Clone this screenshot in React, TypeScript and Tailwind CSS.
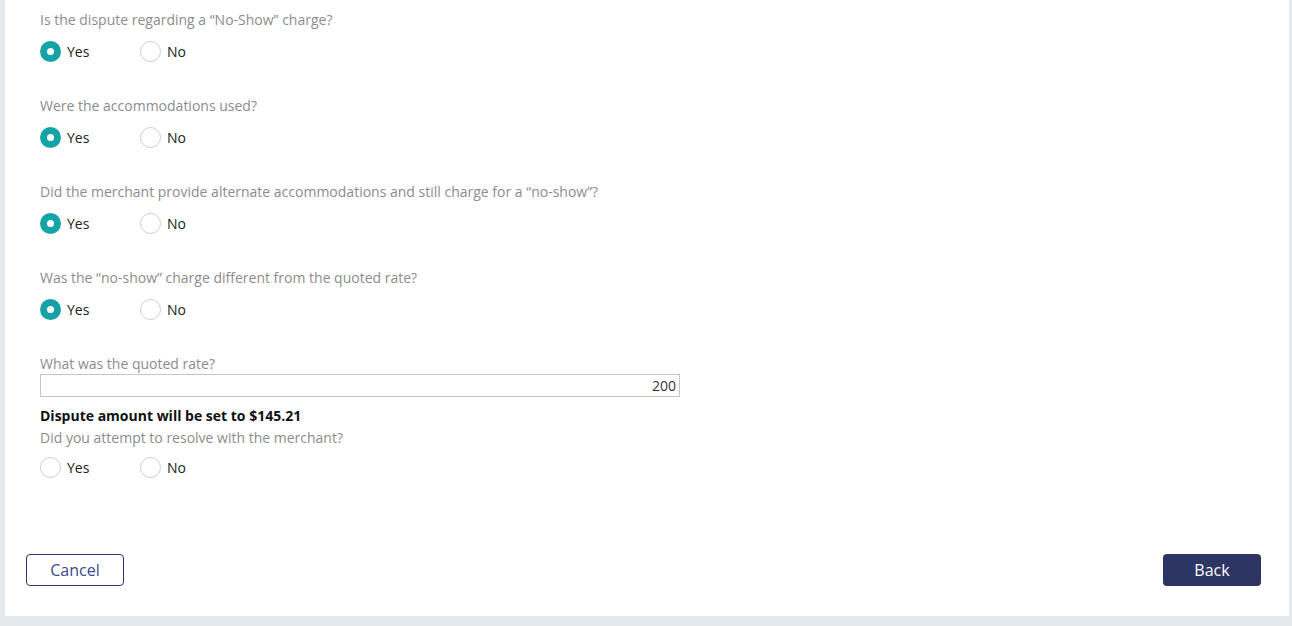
import React from "react";

const font = { fontFamily: '"Open Sans", "Noto Sans", sans-serif' };

function Radio({ checked, label }: { checked: boolean; label: string }) {
  return (
    <div className="flex items-center gap-[6px] w-[100px]">
      {checked ? (
        <span className="w-[21px] h-[21px] rounded-full bg-[#15a3a8] flex items-center justify-center">
          <span className="w-[7px] h-[7px] rounded-full bg-white" />
        </span>
      ) : (
        <span className="w-[21px] h-[21px] rounded-full border border-[#c9ced6] bg-white" />
      )}
      <span className="text-[14px] text-[#222] leading-[20px]">{label}</span>
    </div>
  );
}

function Question({ q, value }: { q: string; value: "yes" | "no" | null }) {
  return (
    <div className="mb-[34px]">
      <div className="text-[14px] leading-[20px] text-[#8c8c8c]">{q}</div>
      <div className="flex mt-[11px] h-[21px]">
        <Radio checked={value === "yes"} label="Yes" />
        <Radio checked={value === "no"} label="No" />
      </div>
    </div>
  );
}

export default function App() {
  return (
    <div className="w-[1292px] h-[626px] bg-[#e5e9ec] pl-[5px] pr-[3px] pb-[10px]" style={font}>
      <div className="bg-white h-full flex flex-col">
        <div className="pl-[35px] pt-[10px]">
          <Question q={"Is the dispute regarding a \u201cNo-Show\u201d charge?"} value="yes" />
          <Question q="Were the accommodations used?" value="yes" />
          <Question q={"Did the merchant provide alternate accommodations and still charge for a \u201cno-show\u201d?"} value="yes" />
          <Question q={"Was the \u201cno-show\u201d charge different from the quoted rate?"} value="yes" />
          <div>
            <div className="text-[14px] leading-[20px] text-[#8c8c8c]">What was the quoted rate?</div>
            <div className="w-[640px] h-[23px] border border-[#c2c6cf] flex items-center justify-end pr-[3px] text-[14px] text-[#333]">
              200
            </div>
            <div className="mt-[9px] text-[14px] leading-[20px] font-bold text-[#111]">
              Dispute amount will be set to $145.21
            </div>
            <div className="text-[14px] leading-[20px] text-[#8c8c8c] mt-[2px]">
              Did you attempt to resolve with the merchant?
            </div>
            <div className="flex mt-[9px] h-[21px]">
              <Radio checked={false} label="Yes" />
              <Radio checked={false} label="No" />
            </div>
          </div>
        </div>
        <div className="mt-auto mb-[30px] px-[21px] flex justify-between">
          <button className="w-[98px] h-[32px] border border-[#2d3566] rounded-[4px] text-[16px] text-[#3b4a8c] bg-white">
            Cancel
          </button>
          <button className="w-[98px] h-[32px] rounded-[4px] text-[16px] text-white bg-[#2d3565] mr-[7px]">
            Back
          </button>
        </div>
      </div>
    </div>
  );
}
